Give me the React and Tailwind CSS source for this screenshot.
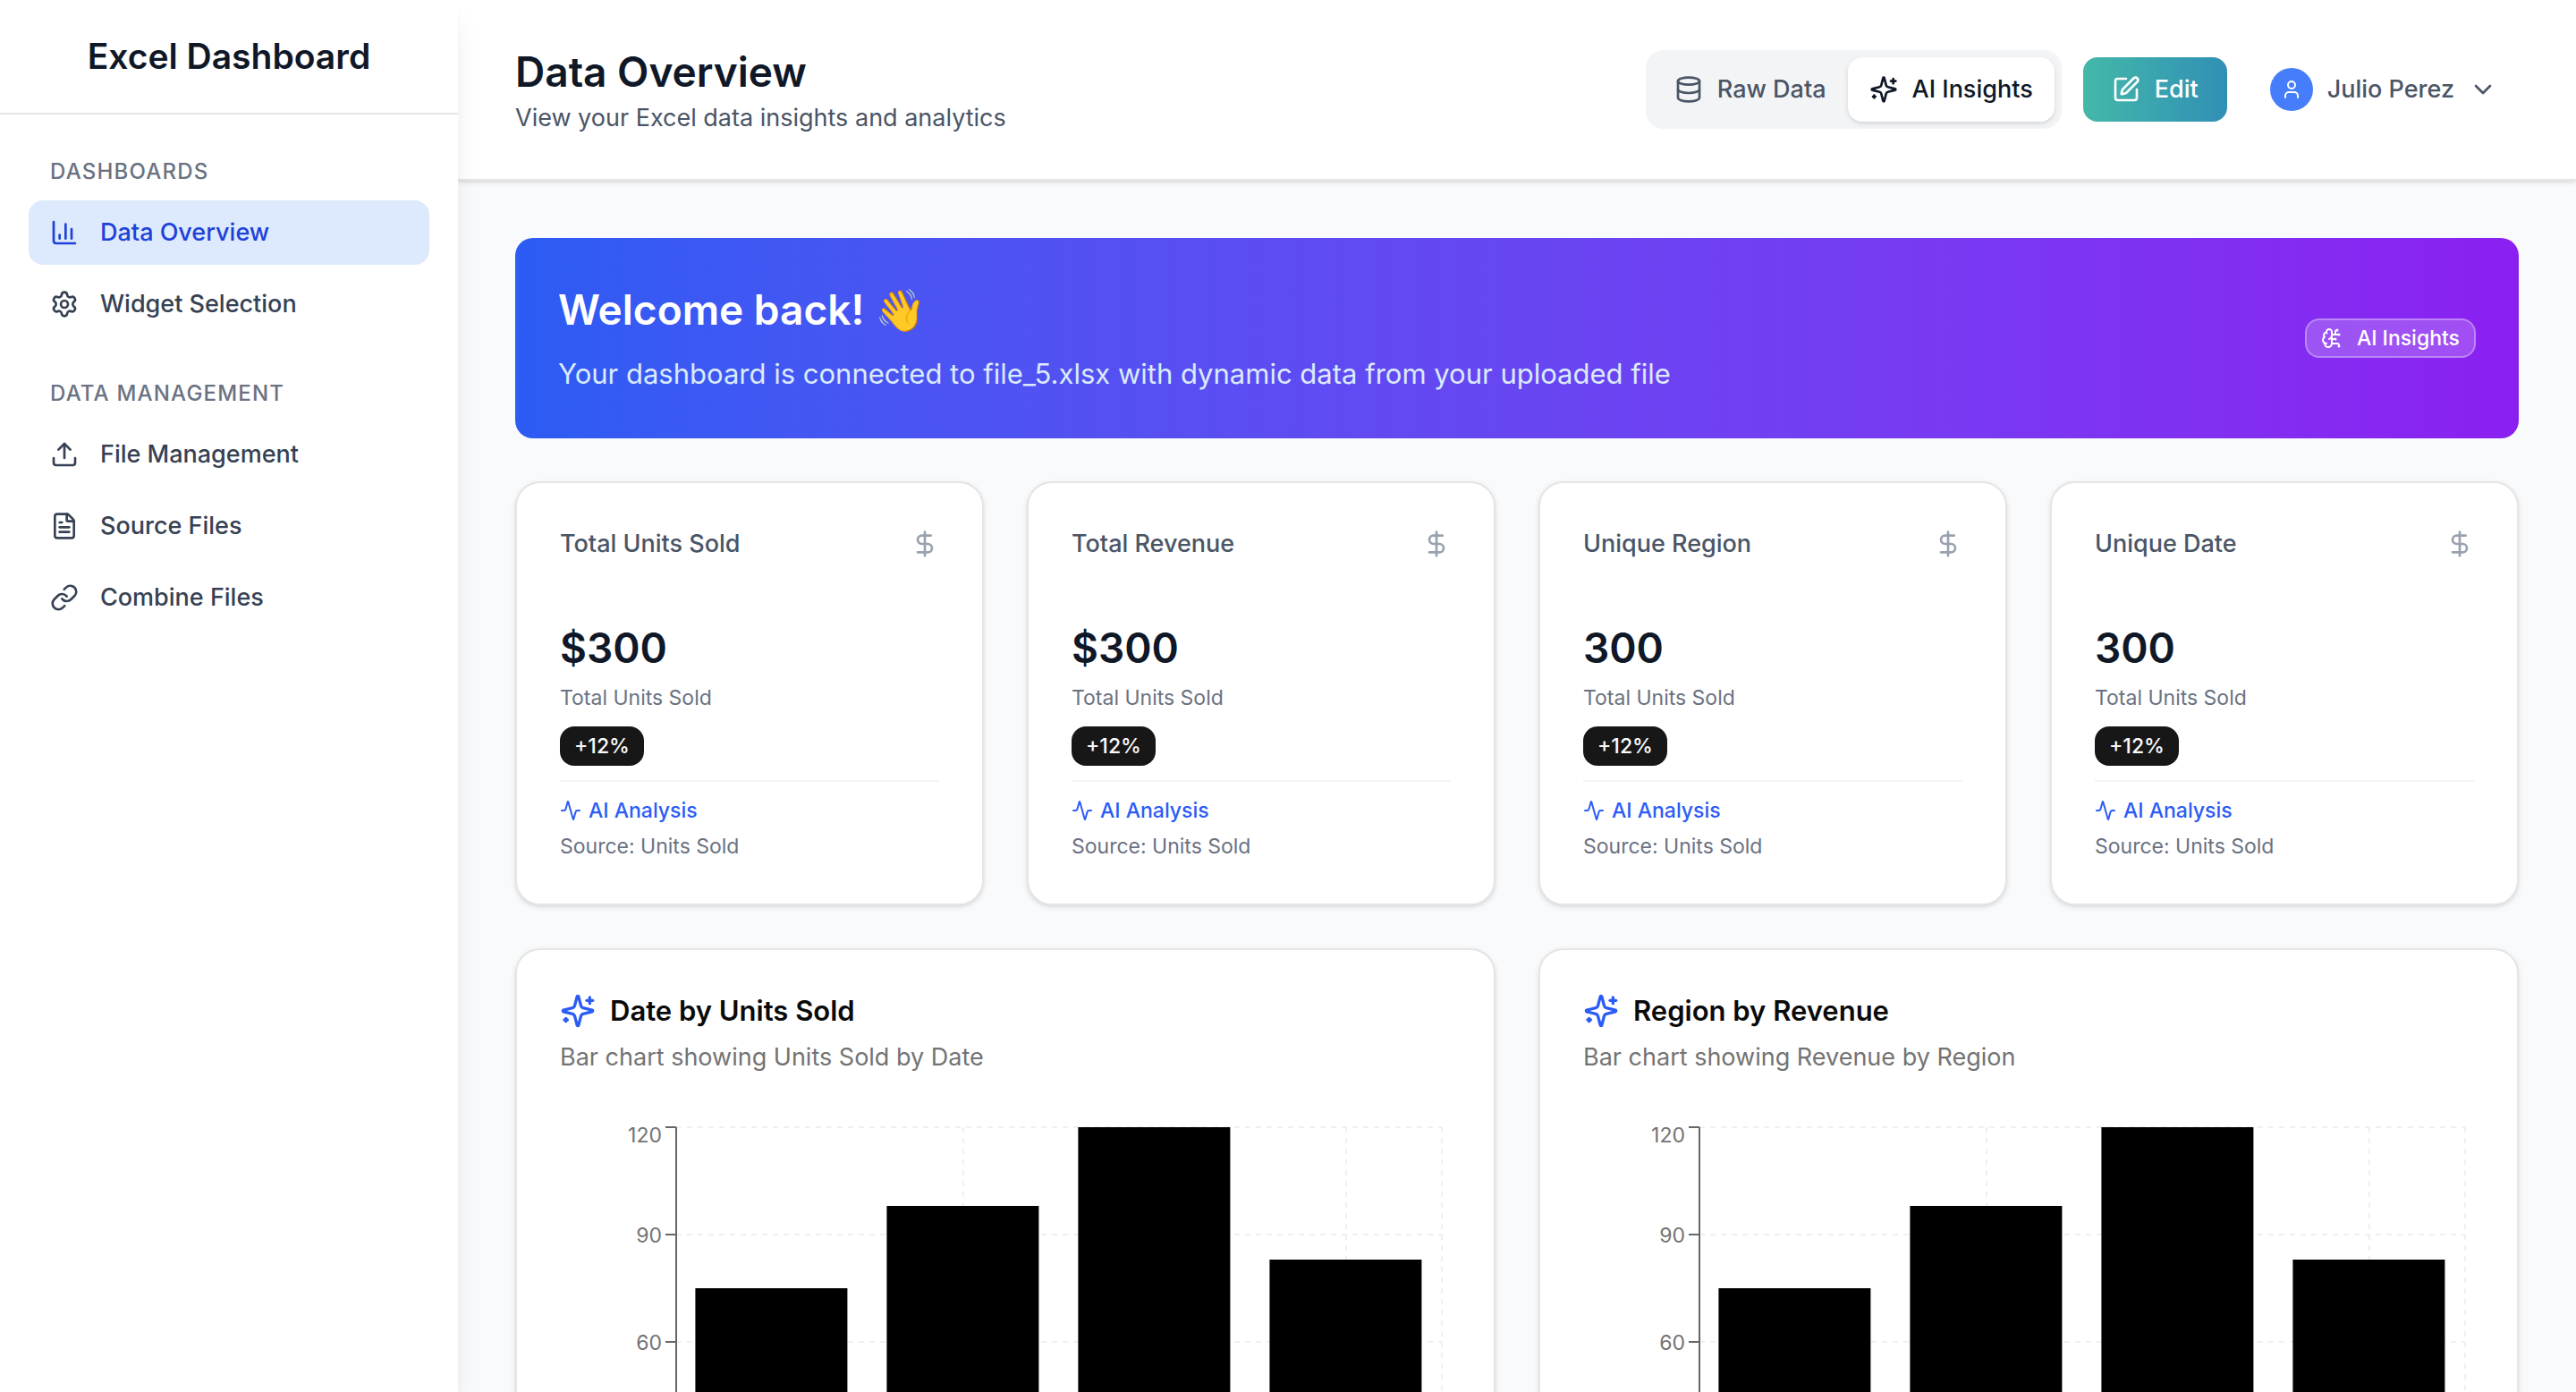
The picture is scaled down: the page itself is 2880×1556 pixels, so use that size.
import React from "react";
import {
  Activity,
  BrainCircuit,
  ChartColumn,
  ChevronDown,
  Database,
  DollarSign,
  FileText,
  Link,
  Settings,
  SquarePen,
  Upload,
  User,
} from "lucide-react";

function Sparkles({ className }) {
  return (
    <svg
      className={className}
      viewBox="0 0 24 24"
      fill="none"
      stroke="currentColor"
      strokeWidth="2"
      strokeLinecap="round"
      strokeLinejoin="round"
      aria-hidden="true"
    >
      <path d="M9.937 15.5A2 2 0 0 0 8.5 14.063l-6.135-1.582a.5.5 0 0 1 0-.962L8.5 9.936A2 2 0 0 0 9.937 8.5l1.582-6.135a.5.5 0 0 1 .963 0L14.063 8.5A2 2 0 0 0 15.5 9.937l6.135 1.581a.5.5 0 0 1 0 .964L15.5 14.063a2 2 0 0 0-1.437 1.437l-1.582 6.135a.5.5 0 0 1-.963 0z" />
      <path d="M20 3v4" />
      <path d="M22 5h-4" />
      <path d="M4 17v2" />
      <path d="M5 18H3" />
    </svg>
  );
}

const navigation = [
  {
    title: "Dashboards",
    items: [
      { label: "Data Overview", icon: ChartColumn, active: true },
      { label: "Widget Selection", icon: Settings },
    ],
  },
  {
    title: "Data Management",
    items: [
      { label: "File Management", icon: Upload },
      { label: "Source Files", icon: FileText },
      { label: "Combine Files", icon: Link },
    ],
  },
];

const metrics = [
  { title: "Total Units Sold", value: "$300" },
  { title: "Total Revenue", value: "$300" },
  { title: "Unique Region", value: "300" },
  { title: "Unique Date", value: "300" },
];

const charts = [
  { title: "Date by Units Sold", description: "Bar chart showing Units Sold by Date", values: [75, 98, 120, 83] },
  { title: "Region by Revenue", description: "Bar chart showing Revenue by Region", values: [75, 98, 120, 83] },
];

function Sidebar() {
  return (
    <aside className="relative z-10 flex w-[512px] shrink-0 flex-col bg-white shadow-[0_20px_30px_-6px_rgba(0,0,0,0.1),0_8px_12px_-8px_rgba(0,0,0,0.1)]">
      <div className="flex h-32 items-center justify-center border-b-2 border-[#e5e5e5]">
        <span className="text-[39px] leading-14 font-semibold text-[#101828]">Excel Dashboard</span>
      </div>
      <nav className="flex flex-col gap-12 px-8 pt-12">
        {navigation.map((section) => (
          <section key={section.title}>
            <h2 className="mb-4 px-6 text-2xl font-medium tracking-wider text-[#6a7282] uppercase">{section.title}</h2>
            <ul className="flex flex-col gap-2">
              {section.items.map(({ label, icon: Icon, active }) => (
                <li key={label}>
                  <a
                    href="#"
                    className={`flex h-[72px] items-center gap-6 rounded-2xl px-6 text-[27px] font-medium ${
                      active ? "bg-[#dde9fc] text-[#1d42d9]" : "text-[#364153]"
                    }`}
                  >
                    <Icon className="size-8" />
                    {label}
                  </a>
                </li>
              ))}
            </ul>
          </section>
        ))}
      </nav>
    </aside>
  );
}

function Header() {
  return (
    <header className="flex h-[202px] shrink-0 items-center justify-between border-b-2 border-[#e5e5e5] bg-white px-16 shadow-[0_2px_6px_rgba(0,0,0,0.1),0_2px_4px_-2px_rgba(0,0,0,0.1)]">
      <div>
        <h1 className="text-[46px] leading-16 font-semibold text-[#101828]">Data Overview</h1>
        <p className="text-[27px] leading-10 text-[#4a5565]">View your Excel data insights and analytics</p>
      </div>
      <div className="flex items-center gap-6 text-[27px] font-medium">
        <div className="flex rounded-[20px] bg-[#f3f4f6] p-2">
          <button type="button" className="flex h-[72px] items-center gap-4 rounded-2xl px-6 text-[#4a5565]">
            <Database className="size-8" />
            Raw Data
          </button>
          <button
            type="button"
            className="flex h-[72px] items-center gap-4 rounded-2xl bg-white px-6 text-[#101828] shadow-[0_2px_6px_rgba(0,0,0,0.1),0_2px_4px_-2px_rgba(0,0,0,0.1)]"
          >
            <Sparkles className="size-8" />
            AI Insights
          </button>
        </div>
        <button
          type="button"
          className="flex h-[72px] items-center gap-4 rounded-2xl bg-linear-to-r from-[#45b8a8] to-[#318fb5] px-8 text-white"
        >
          <SquarePen className="size-8" />
          Edit
        </button>
        <button type="button" className="flex h-[72px] items-center gap-4 rounded-2xl px-6 text-[#4a5565]">
          <span className="flex size-12 items-center justify-center rounded-full bg-[#457dfb] text-white">
            <User className="size-6" />
          </span>
          Julio Perez
          <ChevronDown className="size-8" />
        </button>
      </div>
    </header>
  );
}

function WelcomeBanner() {
  return (
    <section className="flex items-center justify-between rounded-[20px] bg-linear-to-r from-[#2b5cf3] to-[#8b1ff1] p-12 text-white">
      <div>
        <h2 className="mb-4 text-[46px] leading-16 font-semibold">Welcome back! 👋</h2>
        <p className="text-[31px] leading-12 text-[#dbeafe]">
          Your dashboard is connected to file_5.xlsx with dynamic data from your uploaded file
        </p>
      </div>
      <span className="flex h-11 items-center gap-4 rounded-2xl border-2 border-white/30 bg-white/20 px-4 text-[23px] font-medium">
        <BrainCircuit className="size-6" />
        AI Insights
      </span>
    </section>
  );
}

const cardClass =
  "rounded-[28px] border-2 border-[#e5e5e5] bg-white p-12 shadow-[0_2px_6px_rgba(0,0,0,0.1),0_2px_4px_-2px_rgba(0,0,0,0.1)]";

function MetricCard({ title, value }) {
  return (
    <article className={cardClass}>
      <div className="mb-16 flex items-center justify-between">
        <h3 className="text-[27px] leading-10 font-medium text-[#4a5565]">{title}</h3>
        <DollarSign className="size-8 text-[#99a1af]" />
      </div>
      <p className="text-[46px] leading-16 font-semibold text-[#101828]">{value}</p>
      <p className="mt-2 text-[23px] leading-8 text-[#6a7282]">Total Units Sold</p>
      <span className="mt-4 flex h-11 w-fit items-center rounded-2xl bg-[#171717] px-4 text-[23px] font-medium text-[#fafafa]">
        +12%
      </span>
      <div className="mt-4 border-t-2 border-[#f3f4f6] pt-4 text-[23px] leading-8">
        <p className="flex items-center gap-2 font-medium text-[#2b5cf5]">
          <Activity className="size-6" />
          AI Analysis
        </p>
        <p className="mt-2 text-[#6a7282]">Source: Units Sold</p>
      </div>
    </article>
  );
}

const plot = { left: 130, right: 986, top: 10, bottom: 490 };
const ticks = [0, 30, 60, 90, 120];

function BarChart({ values, label }) {
  const y = (v) => plot.bottom - v * 4;
  const band = (plot.right - plot.left) / values.length;
  // Vertical grid lines follow every second category, then the right edge.
  const columns = [
    ...values.map((_, i) => plot.left + band * (i + 0.5)).filter((_, i) => i % 2 === 1),
    plot.right,
  ];
  return (
    <svg viewBox="0 0 996 600" className="mt-12 w-full" role="img" aria-label={label}>
      <g stroke="#f0f0f0" strokeWidth="2" strokeDasharray="6 6">
        {ticks.map((t) => (
          <line key={t} x1={plot.left} x2={plot.right} y1={y(t)} y2={y(t)} />
        ))}
        {columns.map((x) => (
          <line key={x} x1={x} x2={x} y1={plot.top} y2={plot.bottom} />
        ))}
      </g>
      <g stroke="#666666" strokeWidth="2">
        <line x1={plot.left} x2={plot.left} y1={plot.top} y2={plot.bottom} />
        {ticks.map((t) => (
          <line key={t} x1={plot.left - 12} x2={plot.left} y1={y(t)} y2={y(t)} />
        ))}
      </g>
      <g className="text-[23px]" fill="#737373" textAnchor="end">
        {ticks.map((t) => (
          <text key={t} x={plot.left - 16} y={t === 120 ? y(t) + 17 : y(t) + 9}>
            {t}
          </text>
        ))}
      </g>
      {values.map((v, i) => (
        <rect key={i} x={plot.left + band * (i + 0.1)} y={y(v)} width={170} height={v * 4} fill="#000000" />
      ))}
    </svg>
  );
}

function ChartCard({ title, description, values }) {
  return (
    <article className={cardClass}>
      <h3 className="flex items-center gap-4 text-[31px] leading-10 font-semibold text-[#0a0a0a]">
        <Sparkles className="size-10 text-[#2b5cf5]" />
        {title}
      </h3>
      <p className="mt-3 text-[27px] leading-10 text-[#737373]">{description}</p>
      <BarChart values={values} label={description} />
    </article>
  );
}

export default function App() {
  return (
    <div className="flex h-screen overflow-hidden bg-[#f9fafb] font-['Inter',sans-serif]">
      <Sidebar />
      <div className="flex min-w-0 flex-1 flex-col">
        <Header />
        <main className="flex flex-1 flex-col gap-12 overflow-y-auto px-16 py-16 [scrollbar-width:none]">
          <WelcomeBanner />
          <div className="grid grid-cols-4 gap-12">
            {metrics.map((m) => (
              <MetricCard key={m.title} {...m} />
            ))}
          </div>
          <div className="grid grid-cols-2 gap-12">
            {charts.map((c) => (
              <ChartCard key={c.title} {...c} />
            ))}
          </div>
        </main>
      </div>
    </div>
  );
}
